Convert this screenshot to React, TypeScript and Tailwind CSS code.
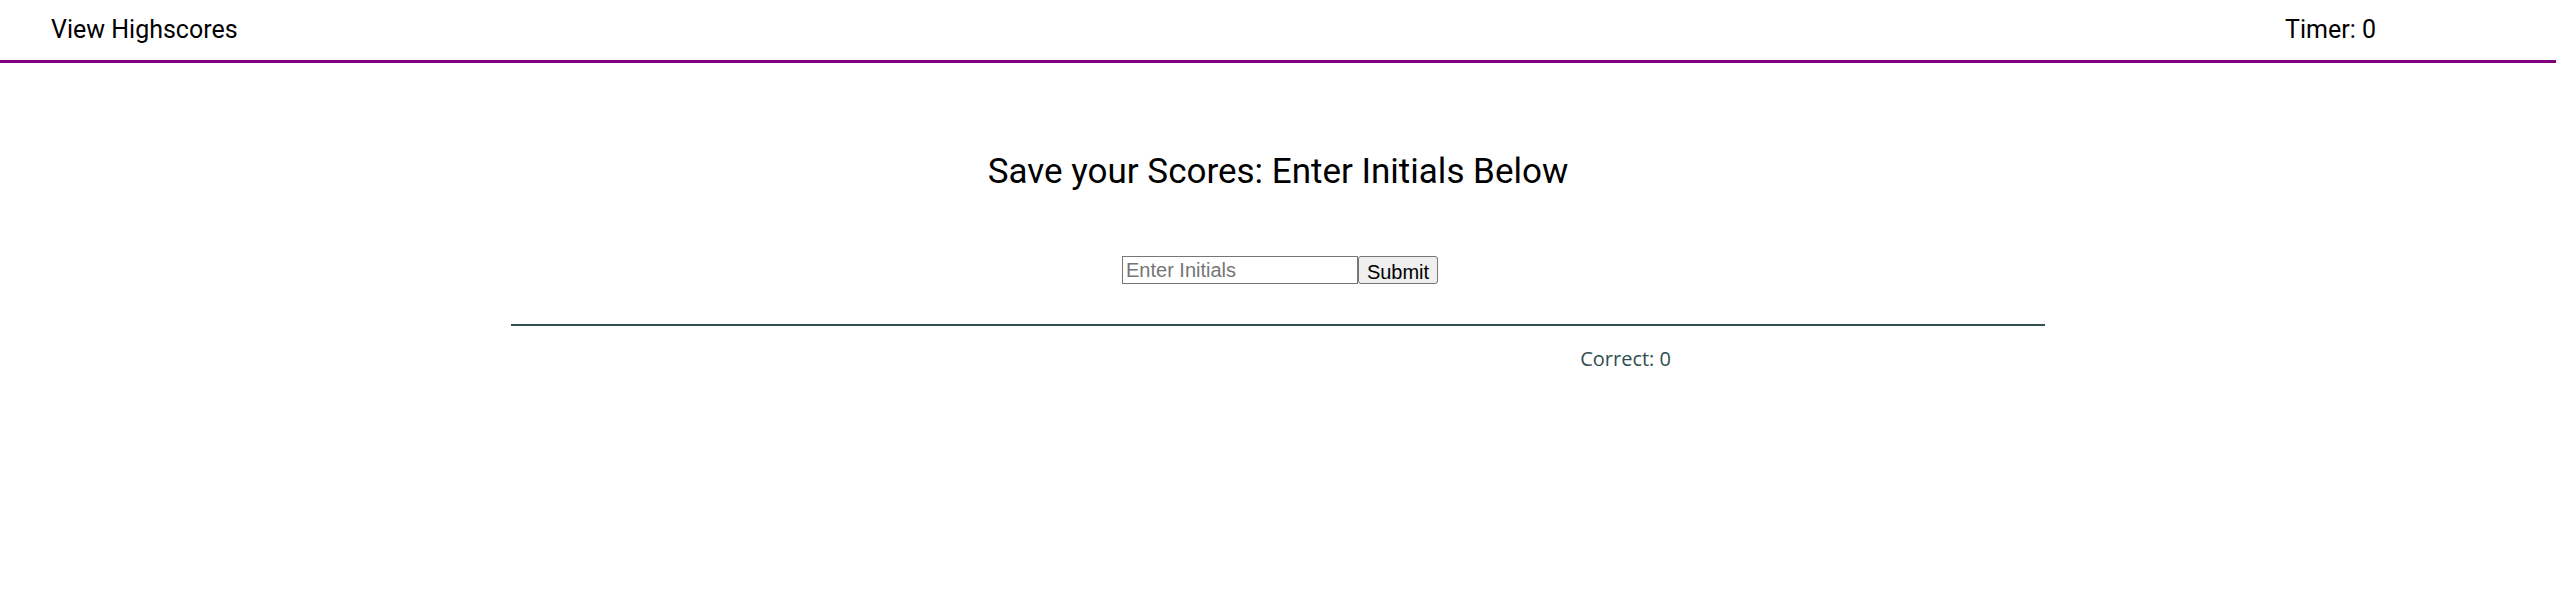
export default function App() {
  return (
    <div className="min-h-screen w-full bg-white text-black">
      {/* Top bar */}
      <header className="flex h-[63px] items-start justify-between border-b-[3px] border-[#800080] pl-[51px] pr-[180px] pt-[15px]">
        <a href="#" className="text-[25px] leading-[29px] text-black" style={{ fontFamily: "Roboto, sans-serif" }}>
          View Highscores
        </a>
        <span className="text-[25px] leading-[29px]" style={{ fontFamily: "Roboto, sans-serif" }}>
          Timer: 0
        </span>
      </header>

      <main className="flex flex-col items-center">
        <h1 className="mt-[88px] text-[35px] font-normal leading-[41px]" style={{ fontFamily: "Roboto, sans-serif" }}>
          Save your Scores: Enter Initials Below
        </h1>

        <form className="ml-[4px] mt-[64px] flex" onSubmit={(e) => e.preventDefault()}>
          <input
            type="text"
            placeholder="Enter Initials"
            className="h-[28px] w-[236px] border border-[#767676] px-[3px] text-[20px] text-black outline-none placeholder:text-[#757575]"
            style={{ fontFamily: "'Liberation Sans', Arial, sans-serif" }}
          />
          <button
            type="submit"
            className="h-[28px] w-[80px] rounded-[3px] border border-[#767676] bg-[#efefef] text-[20px] text-black"
            style={{ fontFamily: "'Liberation Sans', Arial, sans-serif" }}
          >
            Submit
          </button>
        </form>

        <div className="mt-[40px] h-[2px] w-[60%] bg-[#2f4f4f]" />

        <div className="w-[60%]">
          <p className="ml-[1069px] mt-[18px] text-[20px] text-[#2f4f4f]" style={{ fontFamily: "'Open Sans', sans-serif" }}>
            Correct: 0
          </p>
        </div>
      </main>
    </div>
  );
}
